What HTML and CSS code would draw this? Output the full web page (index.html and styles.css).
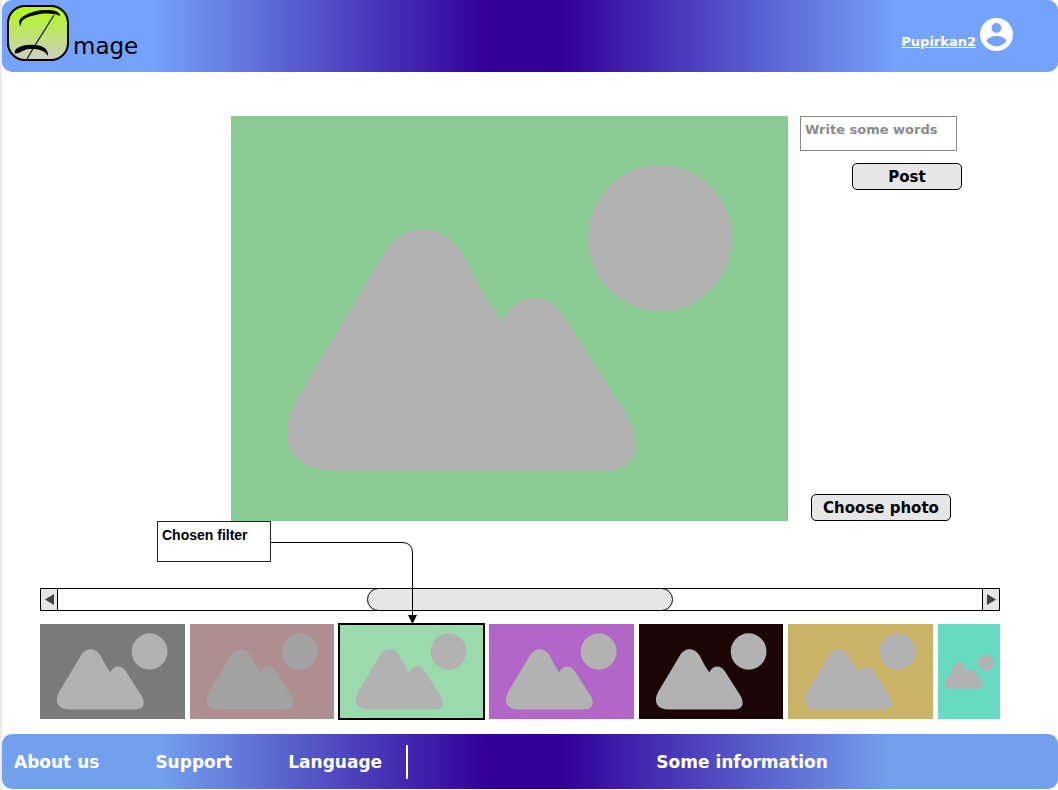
FILE: index.html
```
<!DOCTYPE html>
<html lang="en">
<head>
<meta charset="utf-8">
<title>Image</title>
<link rel="stylesheet" href="styles.css">
</head>
<body>
<svg class="defs" aria-hidden="true">
  <defs>
    <g id="landscape">
      <path d="M191 113C175 113 160 123 149 144L67 281C60 295 56 304 56 316C56 341 76 355 106 355H371C392 355 405 346 405 328C405 319 402 311 397 301L334 202C325 188 315 182 304 182C289 182 279 190 271 206C257 187 245 164 234 142C223 122 206 113 191 113Z"/>
      <ellipse cx="429" cy="122" rx="72" ry="73"/>
    </g>
  </defs>
</svg>
<div class="page">
  <header class="header">
    <a class="brand" href="#" aria-label="Image">
      <svg class="logo" viewBox="0 0 64 58" aria-hidden="true">
        <defs>
          <linearGradient id="lime" x1="0" y1="0" x2="0" y2="1">
            <stop offset="0" stop-color="#b0fb10"/>
            <stop offset="1" stop-color="#cdcdc8"/>
          </linearGradient>
        </defs>
        <rect x="2" y="2" width="60" height="54" rx="17" fill="url(#lime)" stroke="#000" stroke-width="2"/>
        <path d="M48 11L28 43L21 55" fill="none" stroke="#111" stroke-width="1.200"/>
        <path d="M15 22.500C12 18 13 15 17 12.500C25 7 35 5.500 43 6C50 6.500 54 8 54 12C47 9 38 9 30 11C21 13 14 15 15 22.500Z"/>
        <path d="M9 49.500C7 45 15 41 24 40.700C34 40.500 43 43 42 52C39 46 31 44.500 23 45C17 45.500 13 50 9 49.500Z"/>
      </svg>
      <span class="wordmark">mage</span>
    </a>
    <a class="profile" href="#">
      <span class="username">Pupirkan2</span>
      <svg class="avatar" viewBox="2 2 20 20" aria-hidden="true">
        <path d="M12 2C6.500 2 2 6.500 2 12s4.500 10 10 10 10-4.500 10-10S17.500 2 12 2zM12 5a3 3 0 0 1 0 6 3 3 0 0 1 0-6zM12 19.200c-2.500 0-4.700-1.300-6-3.200 0-2 4-3.100 6-3.100s6 1.100 6 3.100c-1.300 1.900-3.500 3.200-6 3.200z"/>
      </svg>
    </a>
  </header>

  <main>
    <section class="editor" aria-label="Editor">
      <svg class="picture" viewBox="0 0 557 405" role="img" aria-label="Photo"><use href="#landscape"/></svg>
      <form class="side">
        <textarea class="caption" rows="1" placeholder="Write some words" aria-label="Caption"></textarea>
        <button class="button post" type="button">Post</button>
        <button class="button choose" type="button">Choose photo</button>
      </form>
    </section>

    <section class="gallery" aria-label="Filters">
      <div class="callout">
        <p class="note">Chosen filter</p>
        <svg class="connector" viewBox="0 0 148 83" aria-hidden="true">
          <path d="M0 1.500H132Q142.500 1.500 142.500 12V76" fill="none" stroke="#000"/>
          <path d="M138 74H147L142.500 83Z"/>
        </svg>
      </div>
      <div class="scroller">
        <button class="step" type="button" aria-label="Previous"><svg viewBox="0 0 9 11"><path d="M9 0V11L0 5.500Z"/></svg></button>
        <input class="track" type="range" min="0" max="100" value="50" aria-label="Scroll filters">
        <button class="step next" type="button" aria-label="Next"><svg viewBox="0 0 9 11"><path d="M0 0V11L9 5.500Z"/></svg></button>
      </div>
      <div class="filters">
        <button class="filter gray" type="button" aria-label="Gray"><svg viewBox="-12 12 582 381"><use href="#landscape"/></svg></button>
        <button class="filter rose" type="button" aria-label="Rose"><svg viewBox="-12 12 582 381"><use href="#landscape"/></svg></button>
        <button class="filter green chosen" type="button" aria-label="Green" aria-pressed="true"><svg viewBox="-12 12 582 381"><use href="#landscape"/></svg></button>
        <button class="filter violet" type="button" aria-label="Violet"><svg viewBox="-12 12 582 381"><use href="#landscape"/></svg></button>
        <button class="filter dark" type="button" aria-label="Dark"><svg viewBox="-12 12 582 381"><use href="#landscape"/></svg></button>
        <button class="filter sand" type="button" aria-label="Sand"><svg viewBox="-12 12 582 381"><use href="#landscape"/></svg></button>
        <button class="filter mint" type="button" aria-label="Mint"><svg viewBox="0 0 557 405"><use href="#landscape"/></svg></button>
      </div>
    </section>
  </main>

  <footer class="footer">
    <nav class="links">
      <a href="#">About us</a>
      <a href="#">Support</a>
      <a href="#">Language</a>
    </nav>
    <p class="info">Some information</p>
  </footer>
</div>
</body>
</html>
```

FILE: styles.css
```
* {
  box-sizing: border-box;
}

body {
  margin: 0;
  background: #fff;
  color: #000;
  font-family: "DejaVu Sans", Verdana, sans-serif;
}

p {
  margin: 0;
}

a {
  color: inherit;
  text-decoration: none;
}

button {
  padding: 0;
  font: inherit;
  cursor: pointer;
}

.defs {
  position: absolute;
  width: 0;
  height: 0;
}

.page {
  min-height: 100vh;
  border-left: 2px solid #ebebeb;
}

.header {
  display: flex;
  justify-content: space-between;
  height: 72px;
  padding: 4px 45px 0 4px;
  border-radius: 10px;
  background: linear-gradient(90deg, #75a3fb 14%, #320099 46%, #320099 53%, #75a3fb 85%);
}

.brand {
  display: flex;
  align-items: flex-end;
  align-self: flex-start;
  gap: 3px;
}

.logo {
  width: 64px;
  height: 58px;
}

.wordmark {
  font-size: 23px;
  line-height: 31px;
}

.profile {
  display: flex;
  align-items: center;
  gap: 4px;
  height: 61px;
  color: #fff;
  font-size: 13px;
  font-weight: bold;
}

.username {
  padding-top: 13px;
  text-decoration: underline;
}

.avatar {
  width: 33px;
  height: 33px;
  fill: #fff;
}

.editor {
  display: grid;
  grid-template-columns: 217fr 557fr 258fr;
  column-gap: 12px;
  padding-top: 44px;
}

.picture {
  grid-column: 2;
  display: block;
  width: 100%;
  background: #8acb93;
  fill: #b2b2b2;
}

.side {
  display: flex;
  flex-direction: column;
  width: 162px;
}

.caption {
  width: 157px;
  height: 35px;
  margin: 0;
  padding: 4px;
  border: 1px solid #888;
  background: #fff;
  font: bold 13px/18px "DejaVu Sans", Verdana, sans-serif;
  overflow: hidden;
  resize: none;
}

.caption::placeholder {
  color: #8a8a8a;
}

.button {
  height: 27px;
  border: 1px solid #000;
  border-radius: 5px;
  background: #e6e6e6;
  color: #000;
  font-size: 15px;
  font-weight: bold;
  line-height: 24px;
}

.post {
  align-self: flex-end;
  width: 110px;
  margin-top: 12px;
}

.choose {
  align-self: center;
  width: 140px;
  margin-top: auto;
}

.gallery {
  padding: 0 58px 15px 38px;
}

.callout {
  position: relative;
  display: flex;
  height: 67px;
  margin-left: 117px;
}

.note {
  width: 114px;
  height: 41px;
  padding: 4px;
  border: 1px solid #222;
  background: #fff;
  font: bold 14px/18px "Liberation Sans", Arial, sans-serif;
}

.connector {
  position: absolute;
  top: 20px;
  left: 113px;
  z-index: 1;
  width: 148px;
  height: 83px;
}

.scroller {
  display: flex;
  height: 23px;
  border: 1px solid #000;
}

.step {
  display: flex;
  align-items: center;
  justify-content: center;
  width: 17px;
  border: 0;
  border-right: 1px solid #000;
  background: #e6e6e6;
}

.step.next {
  border-right: 0;
  border-left: 1px solid #000;
}

.step svg {
  width: 9px;
  height: 11px;
  fill: #444;
}

.track {
  flex: 1;
  min-width: 0;
  margin: -1px 0;
  appearance: none;
  background: transparent;
}

.track::-webkit-slider-thumb {
  appearance: none;
  width: 306px;
  height: 23px;
  border: 1px solid #000;
  border-radius: 12px;
  background: #e6e6e6;
}

.filters {
  display: grid;
  grid-template-columns: repeat(6, 7fr) 3fr;
  gap: 5px;
  margin-top: 13px;
}

.filter {
  height: 95px;
  border: 0;
  fill: #b2b2b2;
}

.filter svg {
  display: block;
  width: 100%;
  height: 100%;
}

.gray { background: #7a7a7a; }
.rose { background: #ae8e8e; fill: #a2a2a2; }
.green { background: #9bdaad; }
.violet { background: #b266c8; }
.dark { background: #1b0505; }
.sand { background: #cab366; }
.mint { background: #67dbc2; }

.chosen {
  outline: 2px solid #000;
  outline-offset: -1px;
}

.footer {
  display: flex;
  align-items: center;
  height: 55px;
  padding: 0 12px;
  border-radius: 10px;
  background: linear-gradient(90deg, #739fed 15%, #320099 46%, #320099 53%, #739fed 84%);
  color: #fff;
  font-size: 17px;
  font-weight: bold;
}

.links {
  display: flex;
  align-items: center;
  gap: 56px;
  height: 34px;
  padding-right: 24px;
  border-right: 2px solid #fff;
}

.info {
  flex: 1;
  padding-left: 30px;
  text-align: center;
}
```
